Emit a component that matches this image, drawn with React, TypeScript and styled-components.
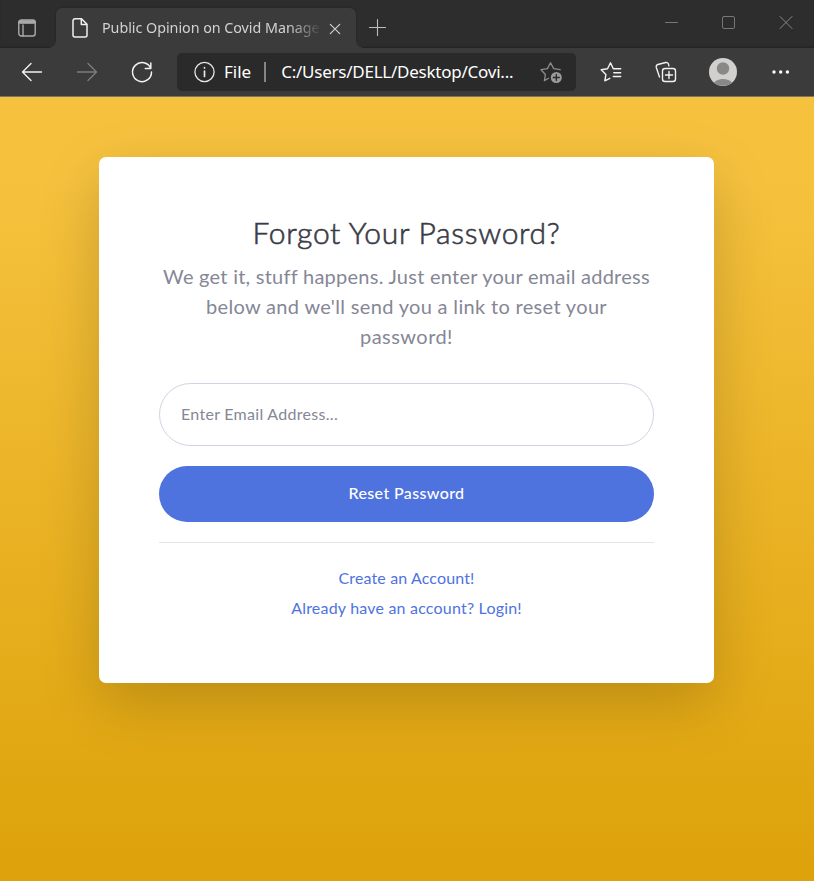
import React from "react";
import styled, { createGlobalStyle } from "styled-components";

const GlobalStyle = createGlobalStyle`
  *, *::before, *::after { box-sizing: border-box; }
  body { margin: 0; background: #dda20a; }
`;

const uiFont = `"Noto Sans", "Open Sans", sans-serif`;
const pageFont = `Lato, "Open Sans", sans-serif`;

const Window = styled.div`
  display: flex;
  flex-direction: column;
  width: 100%;
  height: 100vh;
  min-height: 881px;
  overflow: hidden;
`;

const TabStrip = styled.header`
  display: flex;
  height: 48px;
  padding-top: 8px;
  background: #2d2d2d;
  box-shadow: inset 0 -2px 2px -1px #222;
`;

const TabActions = styled.div`
  display: flex;
  align-items: center;
  justify-content: center;
  width: 56px;
  height: 40px;
  padding-right: 2px;
`;

const Tab = styled.div`
  position: relative;
  display: flex;
  align-items: center;
  width: 300px;
  height: 40px;
  padding: 0 13px 0 16px;
  background: #3b3b3b;
  border-radius: 6px 6px 0 0;
  box-shadow: 0 0 2px #1f1f1f;
  clip-path: inset(-3px -8px 0 -8px);

  &::before,
  &::after {
    content: "";
    position: absolute;
    bottom: 0;
    width: 6px;
    height: 6px;
  }
  &::before {
    left: -6px;
    background: radial-gradient(circle at 0 0, #2d2d2d 5px, #3b3b3b 6px);
  }
  &::after {
    right: -6px;
    background: radial-gradient(circle at 100% 0, #2d2d2d 5px, #3b3b3b 6px);
  }
`;

const TabTitle = styled.span`
  width: 222px;
  margin-left: 14px;
  white-space: nowrap;
  font: 14.3px/22px ${uiFont};
  letter-spacing: -0.03px;
  color: #d2d2d2;
  mask-image: linear-gradient(to right, #000 186px, transparent 220px);
`;

const CloseTab = styled.span`
  display: flex;
  margin-left: auto;
`;

const NewTab = styled.div`
  display: flex;
  align-items: center;
  height: 40px;
  margin-left: 12px;
`;

const WindowControls = styled.div`
  display: flex;
  gap: 43px;
  height: 28px;
  margin-left: auto;
  padding-right: 21px;
  align-items: center;
`;

const Toolbar = styled.nav`
  display: flex;
  align-items: center;
  height: 49px;
  padding: 0 22px 1px 21px;
  background: #3b3b3b;
  border-bottom: 1px solid #747474;
`;

const Navigation = styled.div`
  display: flex;
  gap: 33px;
  margin-right: 24px;
`;

const AddressBar = styled.div`
  display: flex;
  align-items: center;
  width: 399px;
  height: 38px;
  padding: 0 12px 0 16px;
  background: #2a2a2a;
  border-radius: 5px;
  font: 17px/24px ${uiFont};
  color: #fff;
`;

const Scheme = styled.span`
  margin-left: 9px;
`;

const Separator = styled.span`
  width: 2px;
  height: 20px;
  margin: 0 15px 0 13px;
  background: #858585;
`;

const Url = styled.span`
  flex: 1;
  white-space: nowrap;
  letter-spacing: -0.24px;
`;

const Extras = styled.div`
  display: flex;
  align-items: center;
  justify-content: space-between;
  flex: 1;
  margin-left: 24px;
`;

const Page = styled.main`
  flex: 1;
  padding: 60px 100px 0 99px;
  background: linear-gradient(180deg, #f6c23e 10%, #dda20a 100%);
  font-family: ${pageFont};
`;

const Card = styled.section`
  height: 526px;
  padding: 57px 60px 60px;
  background: #fff;
  border-radius: 7px;
  box-shadow: 0 20px 60px rgba(0, 0, 0, 0.175);
  text-align: center;
`;

const Tracked = styled.span<{ $tracking: number }>`
  letter-spacing: ${(p) => p.$tracking}px;
  white-space: nowrap;
`;

const Title = styled.h1`
  margin: 0 0 11px;
  font-size: 30px;
  font-weight: 300;
  line-height: 36px;
  color: #3a3b45;
  -webkit-text-stroke: 0.6px #3a3b45;
`;

const Lead = styled.p`
  margin: 0 0 32px;
  font-size: 20px;
  line-height: 30px;
  color: #858796;
`;

const EmailField = styled.input`
  display: block;
  width: 100%;
  height: 63px;
  margin-bottom: 20px;
  padding: 0 20px 3px 21px;
  border: 1px solid #d1d3e2;
  border-radius: 32px;
  outline: 0;
  font: 16px/24px ${pageFont};
  letter-spacing: 0.29px;

  &::placeholder {
    color: #858796;
    opacity: 1;
  }
`;

const SubmitButton = styled.button`
  display: block;
  width: 100%;
  height: 56px;
  padding: 0 0 3px;
  border: 0;
  border-radius: 28px;
  background: #4e73df;
  font: 500 16px/24px ${pageFont};
  color: #fff;
`;

const Divider = styled.hr`
  height: 1px;
  margin: 20px 0;
  border: 0;
  background: #e5e5e5;
`;

const CardLink = styled.a`
  display: block;
  font-size: 16px;
  line-height: 30px;
  color: #4e73df;
`;

const Stroke = styled.svg<{ $color?: string; $weight?: number }>`
  display: block;
  flex: none;
  overflow: visible;
  fill: none;
  stroke: ${(p) => p.$color ?? "#f2f2f2"};
  stroke-width: ${(p) => p.$weight ?? 1.4};
  stroke-linecap: round;
  stroke-linejoin: round;
`;

export default function App() {
  return (
    <>
      <GlobalStyle />
      <Window>
        <TabStrip>
          <TabActions>
            <Stroke width="18" height="18" viewBox="0 0 18 18" $color="#aaa">
              <rect x=".8" y="1" width="16.4" height="16" rx="2.5" />
              <path d="M1 3.5h16M5 6v11" />
              <path d="M2 3h14" strokeWidth="3.5" />
            </Stroke>
          </TabActions>
          <Tab>
            <Stroke width="16" height="20" viewBox="0 0 16 20" $color="#f0f0f0" $weight={1.5}>
              <path d="M3 .8h6.5L15 6.3V17a2 2 0 0 1-2 2H3a2 2 0 0 1-2-2V2.8a2 2 0 0 1 2-2ZM9.3 1v5.5H15" />
            </Stroke>
            <TabTitle>Public Opinion on Covid Manage</TabTitle>
            <CloseTab>
              <Stroke width="16" height="16" viewBox="0 0 16 16" $color="#d0d0d0" $weight={1.2}>
                <path d="M3.3 4.3l9.4 9.4M12.7 4.3l-9.4 9.4" />
              </Stroke>
            </CloseTab>
          </Tab>
          <NewTab>
            <Stroke width="18" height="18" viewBox="0 0 18 18" $color="#bdbdbd" $weight={1.1}>
              <path d="M1.5 8.5h16M9.5.5v16" />
            </Stroke>
          </NewTab>
          <WindowControls>
            <Stroke width="14" height="14" viewBox="0 0 14 14" $color="#777" $weight={1}>
              <path d="M.5 7.5h12" />
            </Stroke>
            <Stroke width="14" height="14" viewBox="0 0 14 14" $color="#777" $weight={1}>
              <rect x=".5" y="1.5" width="12" height="12" rx="1.5" />
            </Stroke>
            <Stroke width="14" height="14" viewBox="0 0 14 14" $color="#888" $weight={1}>
              <path d="M1 1.5l12 12M13 1.5l-12 12" />
            </Stroke>
          </WindowControls>
        </TabStrip>
        <Toolbar>
          <Navigation>
            <Stroke width="22" height="22" viewBox="0 0 22 22">
              <path d="M20.5 11H1.5M10 2.5L1.5 11l8.5 8.5" />
            </Stroke>
            <Stroke width="22" height="22" viewBox="0 0 22 22" $color="#7d7d7d">
              <path d="M1.5 11h19M12 2.5l8.5 8.5-8.5 8.5" />
            </Stroke>
            <Stroke width="22" height="22" viewBox="0 0 22 22" $weight={1.5}>
              <path d="M19.8 7.5A9.5 9.5 0 1 0 20.5 11M19.8 2v5.5h-5.5" />
            </Stroke>
          </Navigation>
          <AddressBar>
            <Stroke width="22" height="22" viewBox="0 0 22 22" $color="#e6e6e6" $weight={1.3}>
              <circle cx="11.5" cy="11" r="9.6" />
              <path d="M11.5 10v5.5M11.5 6.7v.3" strokeWidth="1.7" />
            </Stroke>
            <Scheme>File</Scheme>
            <Separator />
            <Url>C:/Users/DELL/Desktop/Covi...</Url>
            <Stroke width="24" height="22" viewBox="0 0 24 22" $color="#8c8c8c" $weight={1.3}>
              <path d="M8.5 17.3L4.4 19.6 5.4 13.5 1 8.7 7.4 7.6 10.5 1.8l3.2 5.8 6.5 1" />
              <circle cx="16.3" cy="16.5" r="5.5" fill="#9a9a9a" stroke="none" />
              <path d="M13.3 16.5h6M16.3 13.500v6" stroke="#2a2a2a" />
            </Stroke>
          </AddressBar>
          <Extras>
            <Stroke width="22" height="22" viewBox="0 0 22 22">
              <path d="M9.800 17.300L4.800 19.800 5.900 13.600 1.200 8.700 7.500 7.700 10.500 1.800 13.300 7.700H20.700M13.800 11.700h6.900M13.300 15.500h7.400" />
            </Stroke>
            <Stroke width="22" height="22" viewBox="0 0 22 22">
              <rect x="7.500" y="7.500" width="13" height="13" rx="2.500" />
              <path d="M14 10.500v7M10.500 14h7M4.500 16L1.300 6.500a2.400 2.400 0 0 1 1.600-3L10.700 1.500a2.300 2.300 0 0 1 2.800 1.700l.4 1.500" />
            </Stroke>
            <Stroke width="28" height="28" viewBox="0 0 28 28" $weight={0}>
              <circle cx="14" cy="14" r="14" fill="#d2d0ce" />
              <circle cx="14" cy="10.500" r="6.200" fill="#8a8886" />
              <path d="M5 24.500a10.500 7 0 0 1 18 0A14 14 0 0 1 5 24.500Z" fill="#8a8886" />
            </Stroke>
            <Stroke width="22" height="22" viewBox="0 0 22 22" $weight={0}>
              <g fill="#fff">
                <circle cx="4" cy="11" r="1.700" />
                <circle cx="10.700" cy="11" r="1.700" />
                <circle cx="17.400" cy="11" r="1.700" />
              </g>
            </Stroke>
          </Extras>
        </Toolbar>
        <Page>
          <Card>
            <Title>
              <Tracked $tracking={0.72}>Forgot Your Password?</Tracked>
            </Title>
            <Lead>
              <Tracked $tracking={0.25}>We get it, stuff happens. Just enter your email address</Tracked>
              <br />
              <Tracked $tracking={0.33}>below and we'll send you a link to reset your</Tracked>
              <br />
              <Tracked $tracking={0.45}>password!</Tracked>
            </Lead>
            <EmailField placeholder="Enter Email Address..." />
            <SubmitButton>
              <Tracked $tracking={0.37}>Reset Password</Tracked>
            </SubmitButton>
            <Divider />
            <CardLink>
              <Tracked $tracking={0.13}>Create an Account!</Tracked>
            </CardLink>
            <CardLink>
              <Tracked $tracking={0.2}>Already have an account? Login!</Tracked>
            </CardLink>
          </Card>
        </Page>
      </Window>
    </>
  );
}
